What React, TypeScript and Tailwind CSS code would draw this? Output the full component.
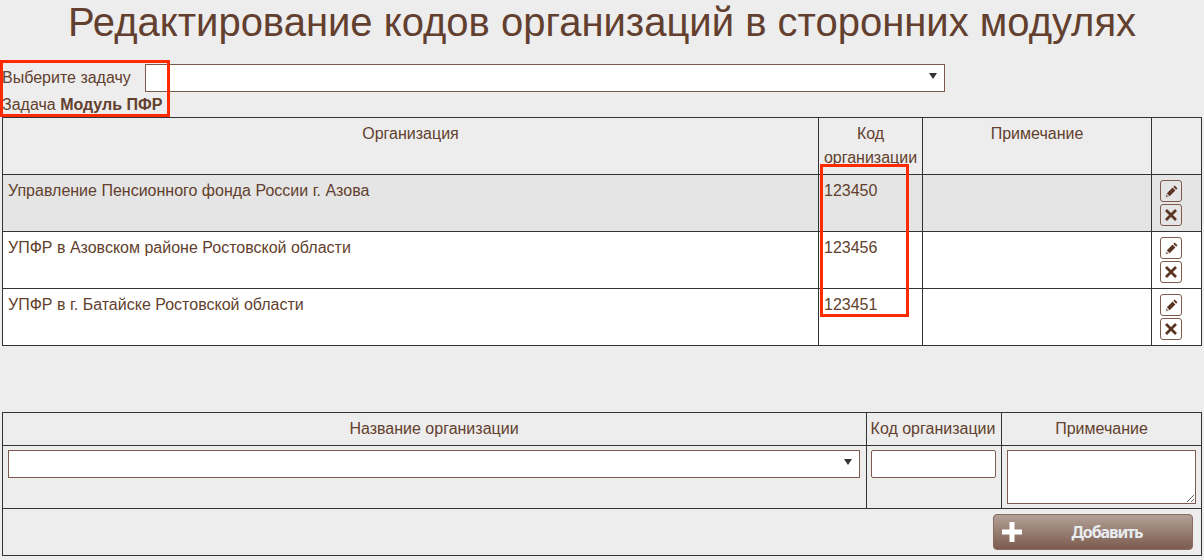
const rows = [
  { name: "Управление Пенсионного фонда России г. Азова", code: "123450", bg: "bg-[#e5e5e5]" },
  { name: "УПФР в Азовском районе Ростовской области", code: "123456", bg: "bg-white" },
  { name: "УПФР в г. Батайске Ростовской области", code: "123451", bg: "bg-white" },
];

function Caret() {
  return <span className="absolute right-[7px] top-[8px] h-0 w-0 border-x-[4px] border-t-[6px] border-x-transparent border-t-[#333]" />;
}

function IconButton({ children }: { children: React.ReactNode }) {
  return (
    <button type="button" className="flex h-[22px] w-[22px] items-center justify-center rounded-[3px] border border-[#7d5a4c] text-[#5c3424]">
      {children}
    </button>
  );
}

function PencilIcon() {
  return (
    <svg width="13" height="13" viewBox="0 0 14 14" fill="currentColor">
      <path d="M10.4 0.6 13.4 3.6 12 5 9 2ZM8.2 2.8 11.2 5.8 5 12 2 9Z" />
      <path d="M1.4 9.8 4.2 12.6 0.6 13.4Z" opacity="0.55" />
    </svg>
  );
}

function CrossIcon() {
  return (
    <svg width="14" height="14" viewBox="0 0 14 14" stroke="currentColor" strokeWidth="2.8" fill="none">
      <path d="M2 2 12 12M12 2 2 12" />
    </svg>
  );
}

function PlusIcon() {
  return (
    <svg width="20" height="20" viewBox="0 0 20 20" fill="#fff" className="absolute left-[8px] top-[7px]">
      <path d="M7.5 0h5v7.5H20v5h-7.5V20h-5v-7.5H0v-5h7.5Z" />
    </svg>
  );
}

export default function App() {
  return (
    <div className="relative h-[560px] w-[1204px] overflow-hidden bg-[#ededed] font-['Liberation_Sans',sans-serif] text-base leading-[24px] text-[#623f2e]">
      <h1 className="h-[46px] text-center text-[40px] leading-[44px]">Редактирование кодов организаций в сторонних модулях</h1>

      <div className="mt-[18px] flex h-[27px] items-center pl-[2px]">
        <span className="w-[143px]">Выберите задачу</span>
        <div className="relative h-[28px] w-[800px] border border-[#7d5a4c] bg-white">
          <Caret />
        </div>
      </div>
      <div className="h-[26px] pl-[2px] pt-[2px]">
        Задача <b>Модуль ПФР</b>
      </div>

      <table className="ml-[2px] w-[1200px] table-fixed border-collapse">
        <colgroup>
          <col className="w-[816px]" />
          <col className="w-[104px]" />
          <col className="w-[229px]" />
          <col />
        </colgroup>
        <thead>
          <tr className="h-[57px]">
            <th className="border border-[#333] px-[3px] pt-[4px] align-top font-normal">Организация</th>
            <th className="border border-[#333] px-[3px] pt-[4px] align-top font-normal">Код организации</th>
            <th className="border border-[#333] px-[3px] pt-[4px] align-top font-normal">Примечание</th>
            <th className="border border-[#333]" />
          </tr>
        </thead>
        <tbody>
          {rows.map((row) => (
            <tr key={row.code} className={`h-[57px] ${row.bg}`}>
              <td className="border border-[#333] px-[5px] pt-[4px] align-top">{row.name}</td>
              <td className="border border-[#333] px-[5px] pt-[4px] align-top">{row.code}</td>
              <td className="border border-[#333]" />
              <td className="border border-[#333] pl-[8px] align-top">
                <div className="mt-[5px] flex flex-col gap-[2px]">
                  <IconButton>
                    <PencilIcon />
                  </IconButton>
                  <IconButton>
                    <CrossIcon />
                  </IconButton>
                </div>
              </td>
            </tr>
          ))}
        </tbody>
      </table>

      <table className="ml-[2px] mt-[66px] w-[1200px] table-fixed border-collapse">
        <colgroup>
          <col className="w-[864px]" />
          <col className="w-[135px]" />
          <col />
        </colgroup>
        <tbody>
          <tr className="h-[33px]">
            <td className="border border-[#333] pr-[1px] text-center">Название организации</td>
            <td className="border border-[#333] pr-[2px] text-center">Код организации</td>
            <td className="border border-[#333] text-center">Примечание</td>
          </tr>
          <tr className="h-[63px]">
            <td className="border border-[#333] px-[5px] pt-[4px] align-top">
              <div className="relative mr-[1px] h-[28px] border border-[#7d5a4c] bg-white">
                <Caret />
              </div>
            </td>
            <td className="border border-[#333] pl-[4px] pr-[5px] pt-[4px] align-top">
              <div className="h-[28px] rounded-[2px] border border-[#7d5a4c] bg-white" />
            </td>
            <td className="border border-[#333] px-[5px] pt-[4px] align-top">
              <textarea className="block h-[54px] w-full border border-[#7d5a4c] bg-white" />
            </td>
          </tr>
          <tr className="h-[47px]">
            <td colSpan={3} className="border border-[#333] pr-[8px] align-middle">
              <button type="button" className="relative ml-auto flex h-[36px] w-[200px] items-center justify-center rounded-[4px] border border-[#8a6d60] bg-gradient-to-b from-[#b3a198] to-[#7c5c4e] pl-[28px] font-['Noto_Sans',sans-serif] text-[16px] font-bold tracking-[-1.1px] text-[#e8edf2]">
                <PlusIcon />
                <span>Добавить</span>
              </button>
            </td>
          </tr>
        </tbody>
      </table>

      <div className="absolute left-0 top-[60px] h-[57px] w-[170px] border-[3px] border-[#ff2a00]" />
      <div className="absolute left-[820px] top-[164px] h-[153px] w-[89px] border-[3px] border-[#ff2a00]" />
    </div>
  );
}
